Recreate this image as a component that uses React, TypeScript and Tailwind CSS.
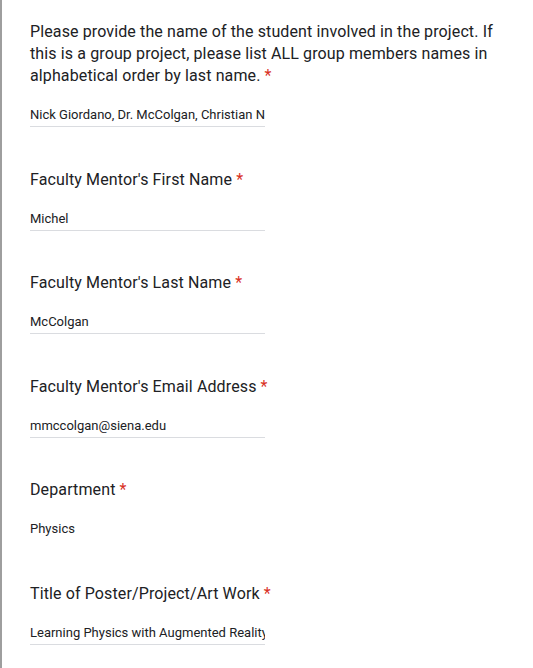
const questions = [
  {
    label:
      'Please provide the name of the student involved in the project. If this is a group project, please list ALL group members names in alphabetical order by last name.',
    value: 'Nick Giordano, Dr. McColgan, Christian Nadeau',
    underline: true,
  },
  { label: "Faculty Mentor's First Name", value: 'Michel', underline: true },
  { label: "Faculty Mentor's Last Name", value: 'McColgan', underline: true },
  { label: "Faculty Mentor's Email Address", value: 'mmccolgan@siena.edu', underline: true },
  { label: 'Department', value: 'Physics', underline: false },
  { label: 'Title of Poster/Project/Art Work', value: 'Learning Physics with Augmented Reality', underline: true },
];

function Question({ label, value, underline }: { label: string; value: string; underline: boolean }) {
  return (
    <div className="flex flex-col">
      <div className="text-[16px] leading-[22px] tracking-[0.12px] text-[#202124] pr-[18px]">
        {label}
        <span className="text-[#d93025]"> *</span>
      </div>
      <div
        className={`mt-[20px] w-[235px] overflow-hidden whitespace-nowrap text-[13px] leading-[16px] text-[#202124] pb-[3px] ${
          underline ? 'border-b border-[#dadce0]' : 'border-b border-transparent'
        }`}
      >
        {value}
      </div>
    </div>
  );
}

export default function App() {
  return (
    <div
      className="w-[533px] h-[668px] overflow-hidden bg-white"
      style={{ fontFamily: 'Roboto, "Liberation Sans", sans-serif' }}
    >
      <div className="h-full border-l-2 border-[#9e9e9e] pl-[28px] pt-[21px] flex flex-col gap-[41.5px]">
        {questions.map((q) => (
          <Question key={q.label} {...q} />
        ))}
      </div>
    </div>
  );
}
